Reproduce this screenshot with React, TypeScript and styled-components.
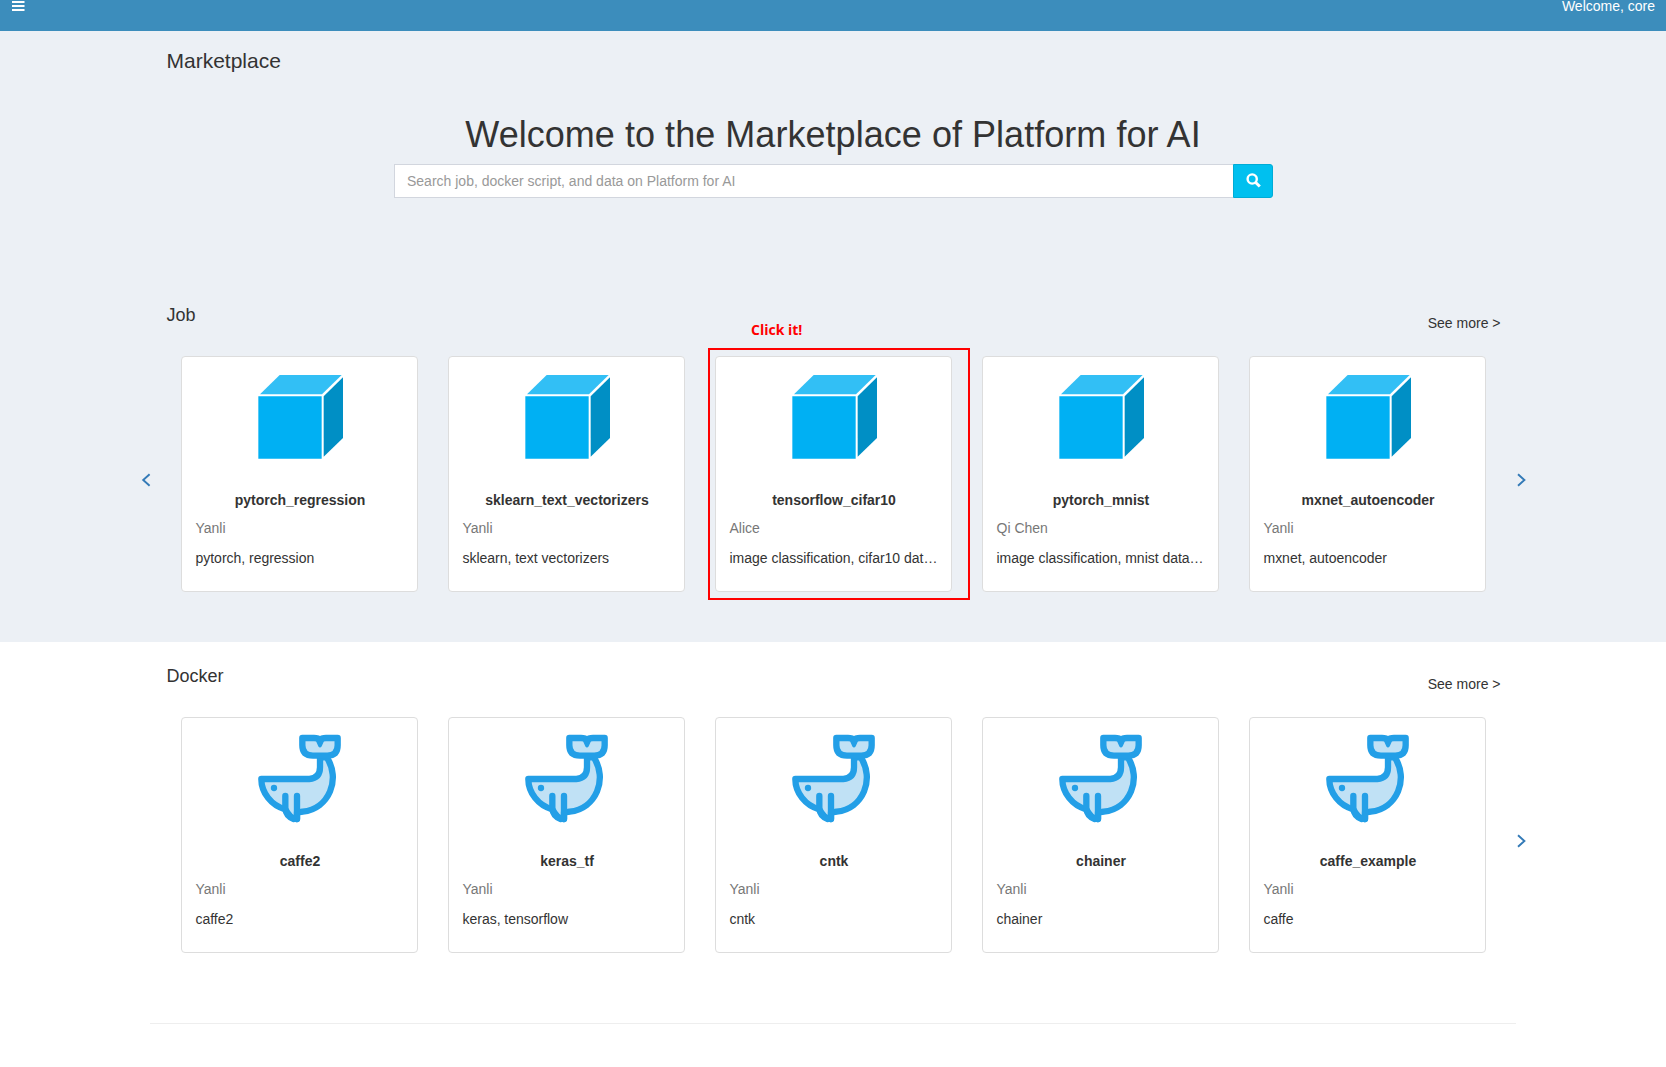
import React from "react";
import styled, { createGlobalStyle } from "styled-components";

const GlobalStyle = createGlobalStyle`
  * { box-sizing: border-box; }
  html, body { margin: 0; padding: 0; }
  body {
    overflow: hidden;
    background: #fff;
    color: #333;
    font: 14px/20px "Liberation Sans", Arial, sans-serif;
  }
  h1, h2, h3, p { margin: 0; font-weight: 400; }
`;

const Page = styled.div`
  height: 1067px;
  display: flex;
  flex-direction: column;
`;

const NavBar = styled.header`
  height: 31px;
  flex: none;
  display: flex;
  justify-content: space-between;
  align-items: flex-start;
  padding: 0 11px 0 12px;
  background: #3c8dbc;
  color: #fff;
`;

const MenuButton = styled.button`
  display: block;
  margin: 1px 0 0;
  padding: 0;
  border: 0;
  background: none;
  svg { display: block; }
`;

const Greeting = styled.span`
  line-height: 12px;
`;

const Hero = styled.section`
  height: 258px;
  flex: none;
  background: #ecf0f5;
`;

const PageTitle = styled.h1`
  padding: 18px 0 0 166.5px;
  font-size: 21px;
  line-height: 24px;
`;

const Headline = styled.h2`
  margin-top: 42px;
  font-size: 36px;
  line-height: 40px;
  letter-spacing: 0.04px;
  text-align: center;
`;

const SearchForm = styled.form`
  display: flex;
  width: 879px;
  height: 34px;
  margin: 9px 0 0 394px;
`;

const SearchInput = styled.input`
  flex: 1;
  padding: 6px 12px;
  border: 1px solid #d2d6de;
  border-right: 0;
  border-radius: 0;
  background: #fff;
  font: inherit;
  outline: none;
  &::placeholder { color: #999; opacity: 1; }
`;

const SearchButton = styled.button`
  width: 40px;
  display: flex;
  align-items: center;
  justify-content: center;
  padding: 0 0 2px;
  border: 1px solid #00acd6;
  border-radius: 0 3px 3px 0;
  background: #00c0ef;
`;

const Section = styled.section<{ $shaded?: boolean }>`
  height: ${(p) => (p.$shaded ? 353 : 382)}px;
  flex: none;
  padding-top: ${(p) => (p.$shaded ? 15 : 23)}px;
  background: ${(p) => (p.$shaded ? "#ecf0f5" : "#fff")};
`;

const SectionHead = styled.div`
  display: flex;
  justify-content: space-between;
  padding: 0 165.5px 0 166.5px;
  height: 52px;
`;

const SectionTitle = styled.h3`
  font-size: 18px;
  line-height: 22px;
`;

const SeeMore = styled.a`
  padding-top: 9px;
  color: #333;
`;

const Carousel = styled.div`
  display: grid;
  grid-template-columns: 40px 1335px 40px;
  margin-left: 126px;
`;

const ArrowCell = styled.div`
  display: flex;
  align-items: center;
  justify-content: center;
  padding-top: 12px;
`;

const CardRow = styled.div`
  display: grid;
  grid-template-columns: repeat(5, 267px);
`;

const CardCell = styled.div`
  position: relative;
  padding: 0 15px;
`;

const CardBox = styled.article`
  height: 236px;
  display: flex;
  flex-direction: column;
  padding: 2px 13px 0 13.5px;
  border: 1px solid #ddd;
  border-radius: 4px;
  background: #fff;
  svg { display: block; align-self: center; flex: none; }
`;

const CardName = styled.strong`
  margin-top: 11px;
  padding-left: 0.5px;
  text-align: center;
`;

const Author = styled.p`
  margin-top: 8px;
  color: #777;
`;

const Description = styled.p`
  margin-top: 10px;
  letter-spacing: -0.02px;
  white-space: nowrap;
`;

const Highlight = styled.div`
  position: absolute;
  top: -8px;
  left: 8px;
  width: 262px;
  height: 252px;
  border: 2px solid #f00;
`;

const Hint = styled.span`
  position: absolute;
  top: -36px;
  left: 51px;
  color: #f00;
  font: 700 14px/20px "Open Sans", "Noto Sans", sans-serif;
  white-space: nowrap;
`;

const Divider = styled.hr`
  width: 1366px;
  flex: none;
  margin: -1px auto 0;
  border: 0;
  border-top: 1px solid #eee;
`;

const MenuIcon = () => (
  <svg width="13" height="10" viewBox="0 0 13 10" fill="#fff">
    <rect width="12.5" height="2" />
    <rect y="4" width="12.5" height="2" />
    <rect y="8" width="12.5" height="2" />
  </svg>
);

const SearchIcon = () => (
  <svg width="15" height="15" viewBox="0 0 15 15" fill="none" stroke="#fff">
    <circle cx="6.2" cy="6" r="4.6" strokeWidth="2.4" />
    <path d="M9.4 9.2L13.8 13.5" strokeWidth="3" />
  </svg>
);

const Chevron = ({ left }: { left?: boolean }) => (
  <svg width="10" height="14" viewBox="0 0 10 14" fill="none" stroke="#337ab7" strokeWidth="1.9">
    <path d={left ? "M8.6 1.2L2.2 7L8.6 12.8" : "M2 1.2L8.4 7L2 12.8"} />
  </svg>
);

const CubeIcon = () => (
  <svg width="120" height="120" viewBox="0 0 360 360">
    <path fill="#32bff5" d="M119 48H305L246 106H60Z" />
    <path fill="#00b0f3" d="M55 112H245V299H55Z" />
    <path fill="#008fc5" d="M251 112L309 55V237L251 293Z" />
  </svg>
);

const WhaleIcon = () => (
  <svg
    width="120"
    height="120"
    viewBox="0 0 360 360"
    fill="#c0e1f5"
    stroke="#239fe7"
    strokeWidth="19"
    strokeLinecap="round"
    strokeLinejoin="round"
  >
    <path d="M64 177H208Q240 175 240 142V112H260C303 176 268 266 188 275Q179 277 171 277V297Q153 299 136 268C94 257 64 218 64 177Z" />
    <path d="M187 54H222Q235 54 240 60Q245 54 258 54H293V76Q293 107 262 107H219Q187 107 187 76Z" />
    <path d="M171 228V297M136 228V266Q138 288 161 297" fill="none" />
    <path d="M234 62H246L240 76Z" fill="#239fe7" strokeWidth="12" />
    <circle cx="102" cy="204" r="9.5" fill="#239fe7" stroke="none" />
  </svg>
);

type Item = { name: string; author: string; description: string; hint?: string };

const jobs: Item[] = [
  { name: "pytorch_regression", author: "Yanli", description: "pytorch, regression" },
  { name: "sklearn_text_vectorizers", author: "Yanli", description: "sklearn, text vectorizers" },
  {
    name: "tensorflow_cifar10",
    author: "Alice",
    description: "image classification, cifar10 dat…",
    hint: "Click it!",
  },
  { name: "pytorch_mnist", author: "Qi Chen", description: "image classification, mnist data…" },
  { name: "mxnet_autoencoder", author: "Yanli", description: "mxnet, autoencoder" },
];

const dockers: Item[] = [
  { name: "caffe2", author: "Yanli", description: "caffe2" },
  { name: "keras_tf", author: "Yanli", description: "keras, tensorflow" },
  { name: "cntk", author: "Yanli", description: "cntk" },
  { name: "chainer", author: "Yanli", description: "chainer" },
  { name: "caffe_example", author: "Yanli", description: "caffe" },
];

type ShelfProps = {
  title: string;
  items: Item[];
  icon: React.ReactNode;
  shaded?: boolean;
  hasPrevious?: boolean;
};

const Shelf = ({ title, items, icon, shaded, hasPrevious }: ShelfProps) => (
  <Section $shaded={shaded}>
    <SectionHead>
      <SectionTitle>{title}</SectionTitle>
      <SeeMore>See more &gt;</SeeMore>
    </SectionHead>
    <Carousel>
      <ArrowCell>{hasPrevious && <Chevron left />}</ArrowCell>
      <CardRow>
        {items.map((item) => (
          <CardCell key={item.name}>
            <CardBox>
              {icon}
              <CardName>{item.name}</CardName>
              <Author>{item.author}</Author>
              <Description>{item.description}</Description>
            </CardBox>
            {item.hint && (
              <>
                <Highlight />
                <Hint>{item.hint}</Hint>
              </>
            )}
          </CardCell>
        ))}
      </CardRow>
      <ArrowCell>
        <Chevron />
      </ArrowCell>
    </Carousel>
  </Section>
);

export default function App() {
  return (
    <Page>
      <GlobalStyle />
      <NavBar>
        <MenuButton type="button" aria-label="Menu">
          <MenuIcon />
        </MenuButton>
        <Greeting>Welcome, core</Greeting>
      </NavBar>
      <Hero>
        <PageTitle>Marketplace</PageTitle>
        <Headline>Welcome to the Marketplace of Platform for AI</Headline>
        <SearchForm>
          <SearchInput placeholder="Search job, docker script, and data on Platform for AI" />
          <SearchButton type="button" aria-label="Search">
            <SearchIcon />
          </SearchButton>
        </SearchForm>
      </Hero>
      <Shelf title="Job" items={jobs} icon={<CubeIcon />} shaded hasPrevious />
      <Shelf title="Docker" items={dockers} icon={<WhaleIcon />} />
      <Divider />
    </Page>
  );
}
